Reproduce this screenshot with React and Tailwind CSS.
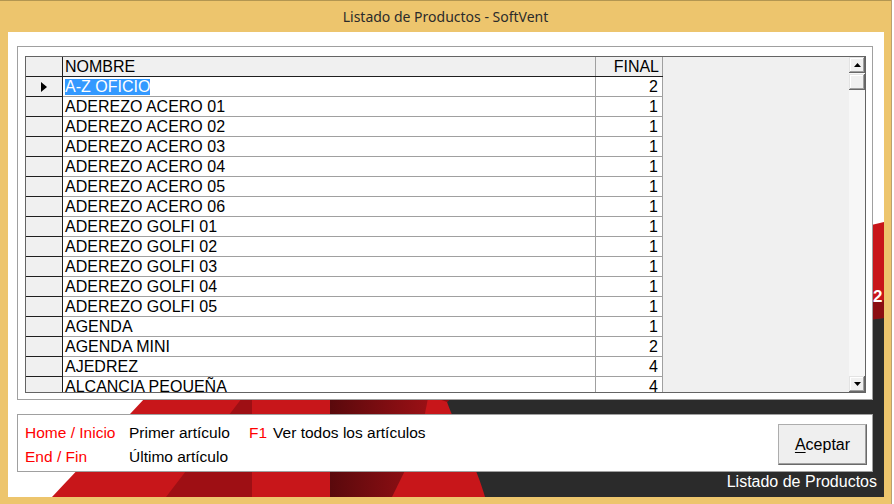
import React from "react";

const rows = [
  ["A-Z OFICIO", 2],
  ["ADEREZO ACERO 01", 1],
  ["ADEREZO ACERO 02", 1],
  ["ADEREZO ACERO 03", 1],
  ["ADEREZO ACERO 04", 1],
  ["ADEREZO ACERO 05", 1],
  ["ADEREZO ACERO 06", 1],
  ["ADEREZO GOLFI 01", 1],
  ["ADEREZO GOLFI 02", 1],
  ["ADEREZO GOLFI 03", 1],
  ["ADEREZO GOLFI 04", 1],
  ["ADEREZO GOLFI 05", 1],
  ["AGENDA", 1],
  ["AGENDA MINI", 2],
  ["AJEDREZ", 4],
  ["ALCANCIA PEQUEÑA", 4],
];

const sans = "font-['Liberation_Sans',Arial,sans-serif]";

function Backdrop() {
  return (
    <svg className="absolute inset-0" width="876" height="465" viewBox="8 32 876 465">
      <defs>
        <linearGradient id="dk" x1="0" x2="1" y1="0" y2="0">
          <stop offset="0" stopColor="#5a090c" />
          <stop offset="1" stopColor="#9a1015" />
        </linearGradient>
      </defs>
      <rect x="8" y="32" width="876" height="465" fill="#fff" />
      <path d="M884 222 L884 497 L52 497 L145 398 Z" fill="#c8161a" />
      <path d="M242 398 L252 398 L252 497 L166 497 Z" fill="#9e0f14" />
      <path d="M330 398 L428 398 L420 440 L392 497 L330 497 Z" fill="url(#dk)" />
      <path d="M884 300 C700 322 470 352 436 398 L447 402 C480 372 700 340 884 318 Z" fill="#8b0e12" />
      <path d="M884 318 C700 340 480 372 447 402 C458 432 478 470 485 497 L884 497 Z" fill="#2b2b2b" />
      <text x="873" y="302" fill="#fff" fontSize="17" fontWeight="bold" fontFamily="Liberation Sans, Arial, sans-serif">2</text>
    </svg>
  );
}

function Arrow({ down }) {
  return (
    <svg width="7" height="4" viewBox="0 0 7 4">
      <polygon points={down ? "0,0 7,0 3.5,4" : "0,4 7,4 3.5,0"} fill="#000" />
    </svg>
  );
}

const btn3d =
  "bg-[#f0f0f0] shadow-[inset_-1px_-1px_0_#696969,inset_1px_1px_0_#e3e3e3,inset_-2px_-2px_0_#a0a0a0,inset_2px_2px_0_#fff]";

function Grid() {
  return (
    <div className={`flex h-[337px] w-[841px] border border-[#646464] bg-[#f0f0f0] overflow-hidden ${sans} text-[16px] text-black`}>
      <div className="w-[637px] shrink-0 bg-white">
        <div className="flex h-[20px] bg-[#f0f0f0] border-b border-[#1e1e1e]">
          <div className="w-[37px] border-r border-[#1e1e1e]" />
          <div className="w-[533px] border-r border-[#a0a0a0] pl-[2px] leading-[19px]">NOMBRE</div>
          <div className="w-[67px] border-r border-[#a0a0a0] pr-[3px] text-right leading-[19px]">FINAL</div>
        </div>
        {rows.map(([name, val], i) => (
          <div key={name} className="flex h-[20px]">
            <div className="w-[37px] shrink-0 bg-[#f0f0f0] border-r border-b border-[#1e1e1e] flex items-center justify-center">
              {i === 0 && (
                <svg width="6" height="10" viewBox="0 0 6 10">
                  <polygon points="0,0 6,5 0,10" fill="#000" />
                </svg>
              )}
            </div>
            <div className="w-[533px] shrink-0 border-r border-b border-[#a0a0a0] pl-[2px] leading-[19px] whitespace-nowrap">
              {i === 0 ? (
                <span className="bg-[#3399ff] text-white inline-block leading-[16px] mt-[1px]">{name}</span>
              ) : (
                name
              )}
            </div>
            <div className="w-[67px] shrink-0 border-r border-b border-[#a0a0a0] pr-[4px] text-right leading-[19px]">{val}</div>
          </div>
        ))}
      </div>
      <div className="flex-1" />
      <div className="w-[16px] flex flex-col justify-between bg-[#f7f7f7]">
        <div>
          <div className={`h-[16px] flex items-center justify-center ${btn3d}`}>
            <Arrow />
          </div>
          <div className={`h-[16px] mt-[1px] ${btn3d}`} />
        </div>
        <div className={`h-[16px] flex items-center justify-center ${btn3d}`}>
          <Arrow down />
        </div>
      </div>
    </div>
  );
}

export default function App() {
  return (
    <div className="w-[894px] h-[504px] bg-white overflow-hidden">
      <div className="w-[892px] h-[504px] bg-[#edc56d] border-r border-[#b9a070] flex flex-col">
        <div className="h-[32px] shrink-0 border-t border-[#b39651] flex items-center justify-center font-['Noto_Sans',sans-serif] text-[14px] text-[#2b2b2b]">
          Listado de Productos - SoftVent
        </div>
        <div className="relative ml-[8px] w-[876px] h-[465px] shrink-0 overflow-hidden">
          <Backdrop />
          <div className="relative flex flex-col">
            <div className="ml-[9px] mt-[14px] w-[856px] h-[354px] border border-[#a0a0a0] bg-white pl-[7px] pt-[9px]">
              <Grid />
            </div>
            <div className={`ml-[9px] mt-[14px] w-[856px] h-[58px] border border-[#a0a0a0] bg-white flex justify-between ${sans}`}>
              <div className="pl-[7px] pt-[6px] text-[15.5px] leading-[24px]">
                <div className="flex">
                  <span className="w-[104px] text-[#ff0000]">Home / Inicio</span>
                  <span className="w-[120px] text-black">Primer artículo</span>
                  <span className="text-[#ff0000] mr-[6px]">F1</span>
                  <span className="text-black">Ver todos los artículos</span>
                </div>
                <div className="flex">
                  <span className="w-[104px] text-[#ff0000]">End / Fin</span>
                  <span className="text-black">Último artículo</span>
                </div>
              </div>
              <button className="mt-[9px] mr-[5px] w-[89px] h-[41px] bg-[#efefef] border border-[#adadad] border-r-[#6a6a6a] border-b-[#6a6a6a] shadow-[inset_-1px_-1px_0_#a0a0a0] text-[16px] text-black">
                <span className="underline underline-offset-2">A</span>ceptar
              </button>
            </div>
            <div className={`mt-[1px] pr-[7px] text-right text-white text-[16px] leading-[18px] ${sans}`}>
              Listado de Productos
            </div>
          </div>
        </div>
      </div>
    </div>
  );
}
